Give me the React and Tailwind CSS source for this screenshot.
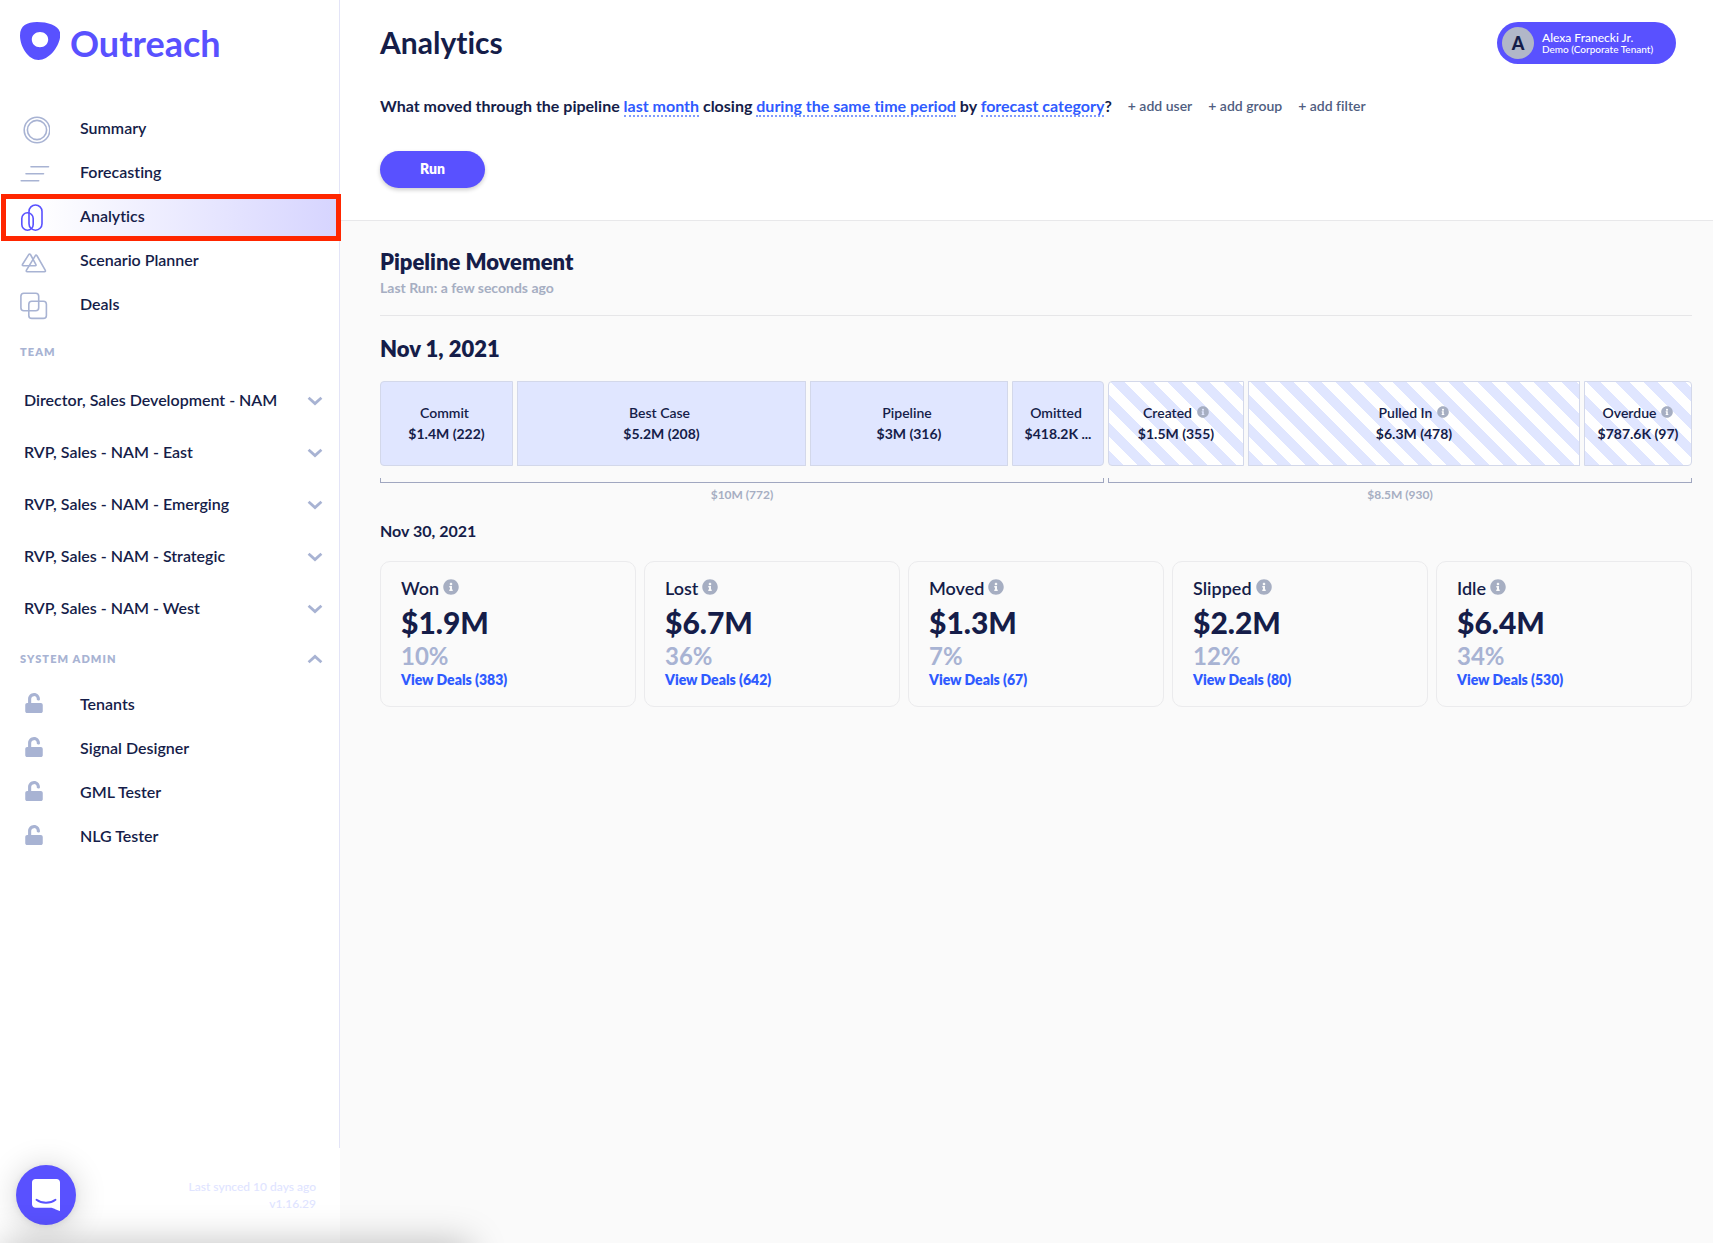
import { FaInfoCircle, FaUnlock } from 'react-icons/fa';

const navItems = [
  {
    label: 'Summary',
    icon: (
      <>
        <circle cx="17" cy="16" r="12.8" />
        <circle cx="17" cy="16" r="9.6" />
      </>
    ),
  },
  {
    label: 'Forecasting',
    icon: <path d="M11 8.7h17.5M6 15.7h17.5M1.2 22.8h17.5" />,
  },
  {
    label: 'Analytics',
    active: true,
    icon: (
      <>
        <rect x="1.8" y="10.8" width="11.4" height="17.4" rx="5.7" />
        <rect x="9" y="3" width="13" height="25.2" rx="6.5" />
      </>
    ),
  },
  {
    label: 'Scenario Planner',
    icon: (
      <>
        <path d="M8.7 8.6 2.6 18.2Q1.8 19.7 3.4 19.7H15.2Q16.5 19.7 15.8 18.4L10.6 8.8Q9.6 7.5 8.7 8.6Z" />
        <path d="M15.2 9.8 6.5 24.2Q5.7 25.7 7.3 25.7H24.4Q26 25.7 25.2 24.2L17 9.8Q16 8.5 15.2 9.8Z" />
      </>
    ),
  },
  {
    label: 'Deals',
    icon: (
      <>
        <rect x="0.9" y="3.2" width="17.8" height="17.6" rx="3" />
        <rect x="8.8" y="11.2" width="17.6" height="17.2" rx="3" />
      </>
    ),
  },
];

const teams = [
  'Director, Sales Development - NAM',
  'RVP, Sales - NAM - East',
  'RVP, Sales - NAM - Emerging',
  'RVP, Sales - NAM - Strategic',
  'RVP, Sales - NAM - West',
];

const adminItems = ['Tenants', 'Signal Designer', 'GML Tester', 'NLG Tester'];

const startSegments = [
  { label: 'Commit', value: '$1.4M (222)' },
  { label: 'Best Case', value: '$5.2M (208)' },
  { label: 'Pipeline', value: '$3M (316)' },
  { label: 'Omitted', value: '$418.2K ...' },
];

const addedSegments = [
  { label: 'Created', value: '$1.5M (355)' },
  { label: 'Pulled In', value: '$6.3M (478)' },
  { label: 'Overdue', value: '$787.6K (97)' },
];

const outcomes = [
  { label: 'Won', value: '$1.9M', percent: '10%', deals: 383 },
  { label: 'Lost', value: '$6.7M', percent: '36%', deals: 642 },
  { label: 'Moved', value: '$1.3M', percent: '7%', deals: 67 },
  { label: 'Slipped', value: '$2.2M', percent: '12%', deals: 80 },
  { label: 'Idle', value: '$6.4M', percent: '34%', deals: 530 },
];

const Chevron = ({ up }) => (
  <svg width="16" height="10" viewBox="0 0 16 10" fill="none" stroke="#a8b3d3" strokeWidth="2.8" className={up ? 'rotate-180' : ''}>
    <path d="M1.6 1.8 8 7.6l6.4-5.8" />
  </svg>
);

const Logo = () => (
  <a href="#" className="flex items-center gap-[10px] px-5 text-[#5951ff]">
    <svg width="40" height="38" viewBox="0 0 40 38" fill="currentColor">
      <path
        fillRule="evenodd"
        d="M17 0C7 0 0 3.5 0 13.500C0 25 8.500 38 18.500 38C30 38 40.300 23 40.300 12.500C40.300 4 29 0 17 0ZM20 10C24.600 10 28.200 13.200 28.200 17.500C28.200 22 24.600 25.200 20 25.200C15.400 25.200 11.800 22 11.800 17.500C11.800 13.200 15.400 10 20 10Z"
      />
    </svg>
    <span className="pt-1 text-[36px] leading-[38px] font-bold">Outreach</span>
  </a>
);

const Sidebar = () => (
  <aside className="relative w-[340px] shrink-0 flex flex-col bg-white">
    <div className="flex-1 border-r border-[#e3e4f7]">
      <div className="h-[107px] pt-5">
        <Logo />
      </div>
      <nav>
        {navItems.map((item) => (
          <a
            key={item.label}
            href="#"
            className={`relative flex items-center gap-[30px] h-11 pl-5 font-semibold ${item.active ? 'bg-linear-to-r from-white from-10% to-[#d6d4ff]' : ''}`}
          >
            <svg width="30" height="30" viewBox="0 0 30 30" fill="none" stroke={item.active ? '#5951ff' : '#a8b3d3'} strokeWidth="1.6" strokeLinecap="round">
              {item.icon}
            </svg>
            <span className="pb-0.5">{item.label}</span>
            {item.active && <span className="absolute -top-px -bottom-0.5 left-px -right-0.5 border-[5px] border-[#ff2600] z-10" />}
          </a>
        ))}
      </nav>
      <h2 className="flex items-center h-12 pt-0.5 px-5 text-[11px] font-extrabold tracking-widest text-[#a8b3d3]">TEAM</h2>
      {teams.map((team) => (
        <button key={team} className="flex items-center justify-between w-full h-[52px] pl-6 pr-4 font-semibold">
          <span className="pb-0.5">{team}</span>
          <Chevron />
        </button>
      ))}
      <button className="flex items-center justify-between w-full h-12 pl-5 pr-4 text-[11px] font-extrabold tracking-widest text-[#a8b3d3]">
        SYSTEM ADMIN
        <Chevron up />
      </button>
      {adminItems.map((item) => (
        <a key={item} href="#" className="flex items-center h-11 pl-6 font-semibold">
          <FaUnlock size={20} className="mr-9 mb-1 text-[#a8b3d3]" />
          <span className="pb-0.5">{item}</span>
        </a>
      ))}
    </div>
    <footer className="h-[95px] pt-[30px] pr-6 text-xs leading-[17px] text-right text-[#e0e4ff] font-medium">
      <p>Last synced 10 days ago</p>
      <p>v1.16.29</p>
    </footer>
    <button
      aria-label="Open chat"
      className="absolute left-4 bottom-[18px] flex items-center justify-center size-[60px] rounded-full bg-[#5951ff] shadow-[0_1px_6px_rgba(0,0,0,0.08),0_2px_32px_rgba(0,0,0,0.18)]"
    >
      <svg width="28" height="32" viewBox="0 0 28 32">
        <path d="M28 32s-4.700-1.900-8.500-3.300H3.400C1.500 28.700 0 27.100 0 25.200V3.400C0 1.500 1.500 0 3.400 0H24.600C26.500 0 28 1.500 28 3.400V32Z" fill="#fff" />
        <path d="M4.500 20.800C9.800 24.800 18.200 24.800 23.500 20.800" fill="none" stroke="#5951ff" strokeWidth="1.9" strokeLinecap="round" />
      </svg>
    </button>
  </aside>
);

const QueryLink = ({ children }) => (
  <a href="#" className="text-[#2f5bff] border-b-2 border-dotted border-[#7f9bff]">
    {children}
  </a>
);

const Header = () => (
  <header className="pt-[22px] pb-8 pl-10 pr-[37px] bg-white border-b border-[#e8e8ea]">
    <div className="flex items-center justify-between h-[42px]">
      <h1 className="pb-0.5 text-[30px] leading-8 font-bold">Analytics</h1>
      <button className="flex items-center gap-2 h-[42px] w-[179px] pl-[5px] rounded-full bg-[#5951ff] text-white text-left">
        <span className="flex items-center justify-center size-8 rounded-full bg-[#b1b7c8] text-[#151d49] text-lg font-black">A</span>
        <span className="font-medium whitespace-nowrap">
          <span className="block text-xs leading-3">Alexa Franecki Jr.</span>
          <span className="block text-[10px] leading-[10px]">Demo (Corporate Tenant)</span>
        </span>
      </button>
    </div>
    <div className="flex items-center gap-4 mt-[30px] leading-6">
      <p className="font-bold">
        What moved through the pipeline <QueryLink>last month</QueryLink> closing <QueryLink>during the same time period</QueryLink> by{' '}
        <QueryLink>forecast category</QueryLink>?
      </p>
      {['+ add user', '+ add group', '+ add filter'].map((action) => (
        <button key={action} className="text-sm font-semibold text-[#4f5d80]">
          {action}
        </button>
      ))}
    </div>
    <button className="mt-[33px] pb-0.5 w-[105px] h-[37px] rounded-full bg-[#5951ff] text-sm font-extrabold text-white shadow-[0_2px_4px_rgba(0,0,0,0.2)]">Run</button>
  </header>
);

const Segment = ({ label, value, striped }) => (
  <div
    className={`flex flex-col items-center justify-center pb-0.5 min-w-0 h-[85px] border border-[#d3d8ea] first:rounded-l last:rounded-r text-sm leading-[21px] whitespace-nowrap ${
      striped ? 'bg-[repeating-linear-gradient(45deg,#e0e6ff_0_10px,#fff_10px_20px)]' : 'bg-[#e0e6ff]'
    }`}
  >
    <span className={`flex items-center gap-[5px] font-semibold ${striped ? '' : 'pr-1'}`}>
      {label}
      {striped && <FaInfoCircle size={12} className="text-[#a6aec2]" />}
    </span>
    <span className="font-bold">{value}</span>
  </div>
);

const Bracket = ({ children }) => (
  <>
    <div className="mt-3 h-[5px] border border-t-0 border-[#a0a7c0]" />
    <p className="mt-1 text-xs leading-4 font-bold text-center text-[#a6aec2]">{children}</p>
  </>
);

const App = () => {
  return (
    <div className="flex min-h-screen overflow-hidden relative bg-[#fafafa] text-[#151d49] text-base font-['Lato',sans-serif] [font-variant-ligatures:none]">
      <Sidebar />
      <div className="flex-1 min-w-0">
        <Header />
        <main className="pt-[27px] pl-10 pr-[21px]">
          <h2 className="text-[22px] leading-7 font-extrabold">Pipeline Movement</h2>
          <p className="mt-0.5 text-sm leading-5 font-bold text-[#a6aec2]">Last Run: a few seconds ago</p>
          <hr className="mt-[17px] border-[#e6e6e8]" />
          <h3 className="mt-[19px] text-[22px] leading-7 font-extrabold">Nov 1, 2021</h3>

          <div className="grid grid-cols-[724fr_584fr] gap-1 mt-[18px]">
            <section>
              <div className="grid grid-cols-[133fr_289fr_198fr_92fr] gap-1">
                {startSegments.map((segment) => (
                  <Segment key={segment.label} {...segment} />
                ))}
              </div>
              <Bracket>$10M (772)</Bracket>
            </section>
            <section>
              <div className="grid grid-cols-[136fr_332fr_108fr] gap-1">
                {addedSegments.map((segment) => (
                  <Segment key={segment.label} {...segment} striped />
                ))}
              </div>
              <Bracket>$8.5M (930)</Bracket>
            </section>
          </div>

          <h3 className="mt-4 leading-6 font-bold">Nov 30, 2021</h3>
          <div className="grid grid-cols-5 gap-2 mt-[18px]">
            {outcomes.map((outcome) => (
              <article key={outcome.label} className="px-5 py-[14px] border border-[#ebebed] rounded-[10px] leading-6">
                <h4 className="flex items-center gap-1 text-lg leading-6 font-semibold">
                  {outcome.label}
                  <FaInfoCircle size={16} className="mb-0.5 text-[#a6aec2]" />
                </h4>
                <p className="text-[30px] leading-[44px] font-black">{outcome.value}</p>
                <p className="text-2xl leading-6 font-bold text-[#a8b3d3]">{outcome.percent}</p>
                <a href="#" className="block text-sm leading-6 font-extrabold text-[#2f5bff]">
                  View Deals ({outcome.deals})
                </a>
              </article>
            ))}
          </div>
        </main>
      </div>
      {/* soft shade along the bottom edge */}
      <div className="absolute top-full left-0 w-[470px] h-10 shadow-[0_0_36px_rgba(0,0,0,0.25)] pointer-events-none" />
    </div>
  );
};

export default App;
